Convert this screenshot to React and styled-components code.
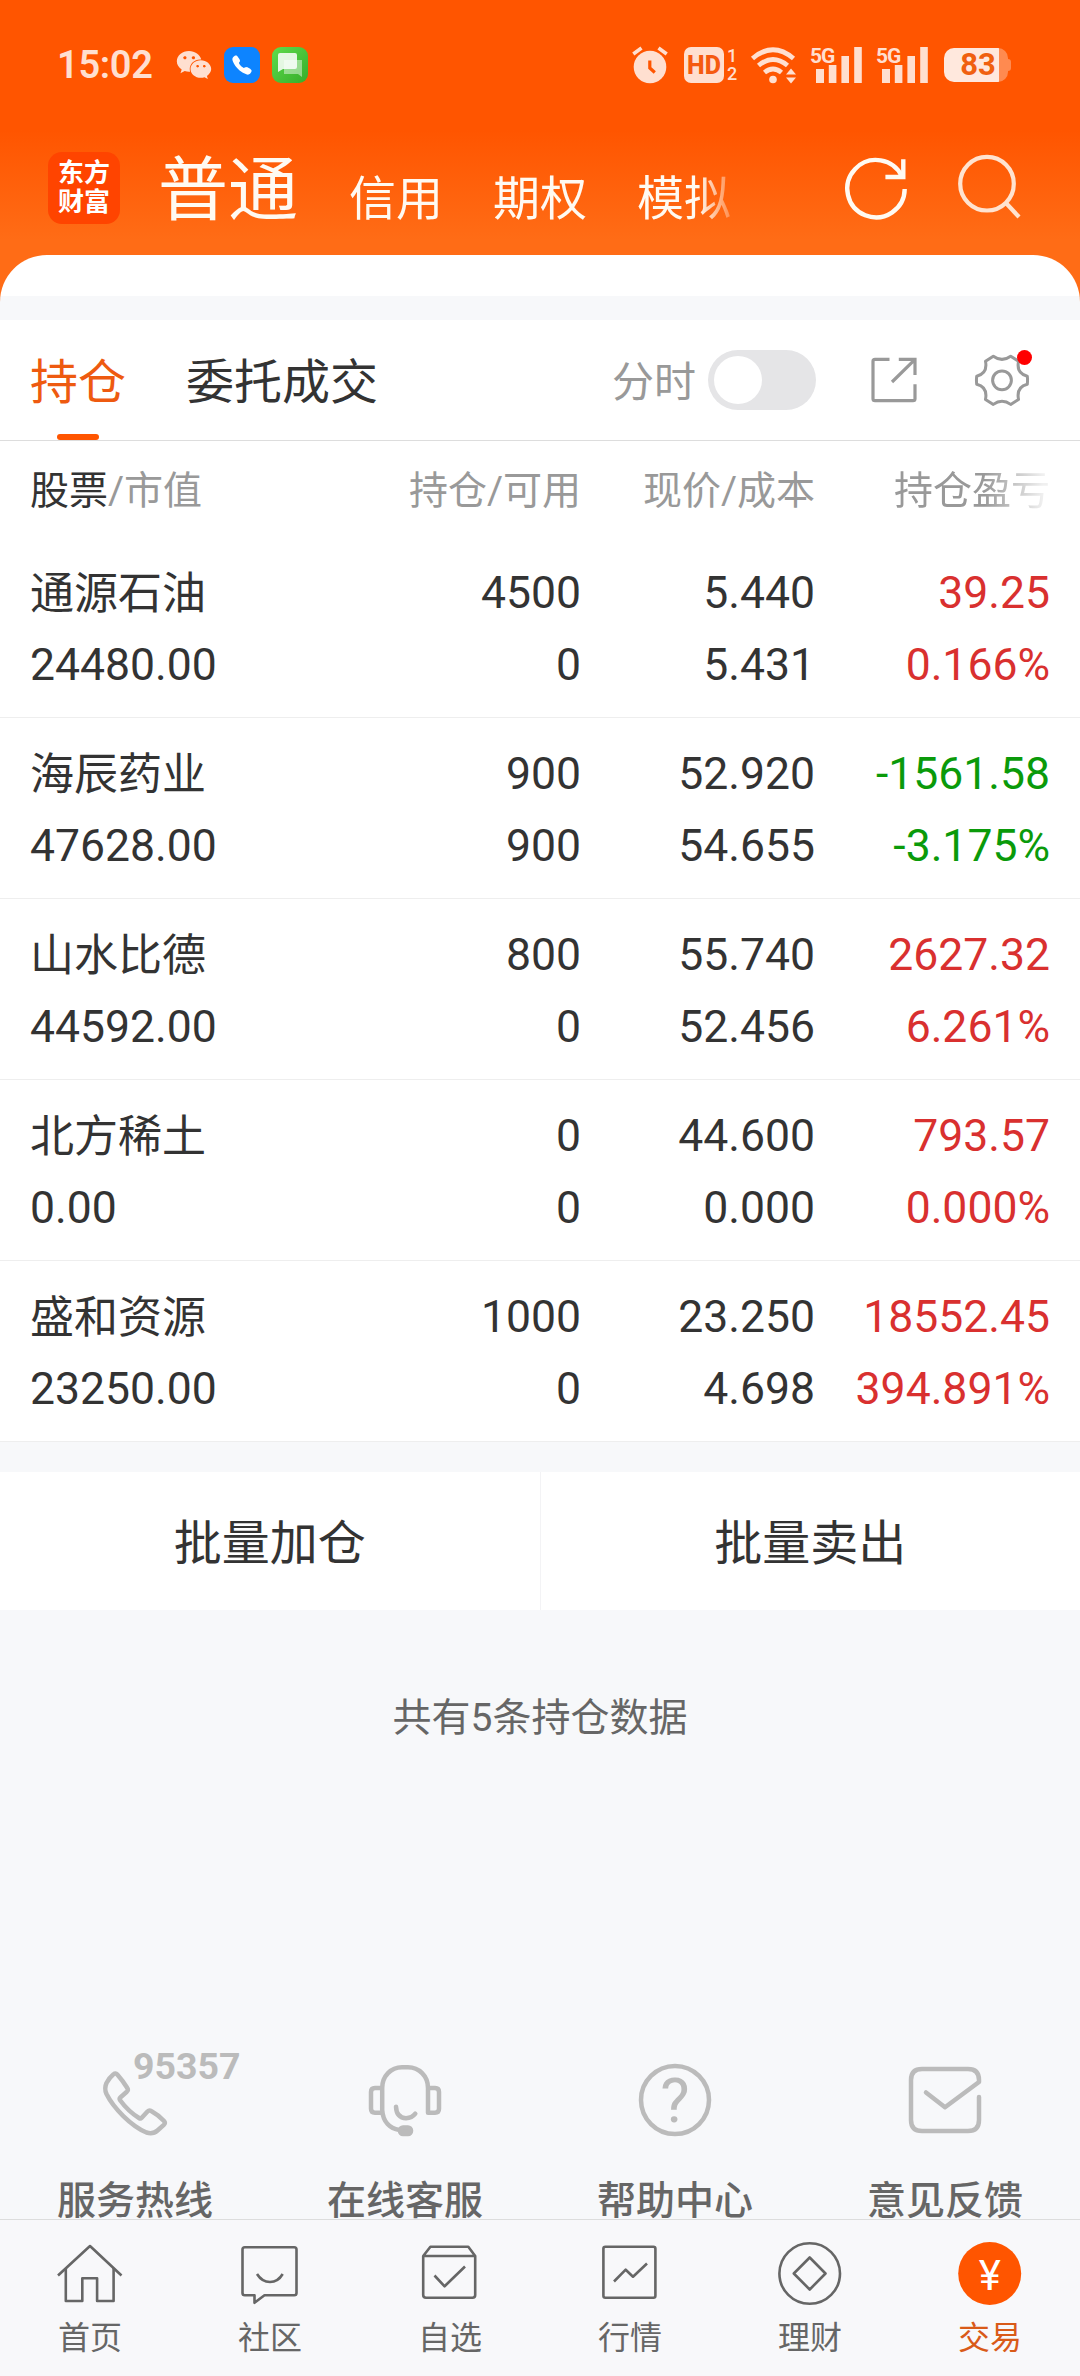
import styled, { createGlobalStyle } from "styled-components";
import { FaWeixin } from "react-icons/fa";
import { IoCall } from "react-icons/io5";

const holdings = [
    { name: "通源石油", value: "24480.00", amount: "4500", usable: "0", price: "5.440", cost: "5.431", profit: "39.25", rate: "0.166%" },
    { name: "海辰药业", value: "47628.00", amount: "900", usable: "900", price: "52.920", cost: "54.655", profit: "-1561.58", rate: "-3.175%" },
    { name: "山水比德", value: "44592.00", amount: "800", usable: "0", price: "55.740", cost: "52.456", profit: "2627.32", rate: "6.261%" },
    { name: "北方稀土", value: "0.00", amount: "0", usable: "0", price: "44.600", cost: "0.000", profit: "793.57", rate: "0.000%" },
    { name: "盛和资源", value: "23250.00", amount: "1000", usable: "0", price: "23.250", cost: "4.698", profit: "18552.45", rate: "394.891%" },
];

const services = [
    { label: "服务热线", icon: <HotlineIcon />, number: "95357" },
    { label: "在线客服", icon: <HeadsetIcon /> },
    { label: "帮助中心", icon: <HelpIcon /> },
    { label: "意见反馈", icon: <FeedbackIcon /> },
];

const menu = [
    { label: "首页", icon: <HomeIcon /> },
    { label: "社区", icon: <ChatIcon /> },
    { label: "自选", icon: <BoxIcon /> },
    { label: "行情", icon: <ChartIcon /> },
    { label: "理财", icon: <CoinIcon /> },
    { label: "交易", icon: <TradeIcon />, active: true },
];

export default function App() {
    return (
        <>
            <GlobalStyle />
            <Page>
                <Header>
                    <StatusBar />
                    <TitleBar>
                        <Logo>
                            <span>东方</span>
                            <span>财富</span>
                        </Logo>
                        <Accounts>
                            <Account $big>普通</Account>
                            <Account>信用</Account>
                            <Account>期权</Account>
                            <Account>模拟</Account>
                        </Accounts>
                        <TitleActions>
                            <RefreshIcon />
                            <SearchIcon />
                        </TitleActions>
                    </TitleBar>
                    <Sheet />
                </Header>
                <Tabs>
                    <Tab $active>持仓</Tab>
                    <Tab>委托成交</Tab>
                    <TabTools>
                        <SwitchLabel>分时</SwitchLabel>
                        <Switch>
                            <Knob />
                        </Switch>
                        <ExportIcon />
                        <Settings>
                            <GearIcon />
                            <RedDot />
                        </Settings>
                    </TabTools>
                </Tabs>
                <TableHead>
                    <HeadCell $left>
                        <b>股票</b>/市值
                    </HeadCell>
                    <HeadCell>持仓/可用</HeadCell>
                    <HeadCell>现价/成本</HeadCell>
                    <HeadCell $fade>持仓盈亏</HeadCell>
                </TableHead>
                {holdings.map((item) => (
                    <Row key={item.name}>
                        <Cell $left>
                            <Name>{item.name}</Name>
                            <span>{item.value}</span>
                        </Cell>
                        <Cell>
                            <span>{item.amount}</span>
                            <span>{item.usable}</span>
                        </Cell>
                        <Cell>
                            <span>{item.price}</span>
                            <span>{item.cost}</span>
                        </Cell>
                        <Cell $color={item.profit.startsWith("-") ? "#0a9a0a" : "#d9302f"}>
                            <span>{item.profit}</span>
                            <span>{item.rate}</span>
                        </Cell>
                    </Row>
                ))}
                <BatchBar>
                    <BatchButton>批量加仓</BatchButton>
                    <BatchButton>批量卖出</BatchButton>
                </BatchBar>
                <Summary>共有5条持仓数据</Summary>
                <Services>
                    {services.map((item) => (
                        <Service key={item.label}>
                            <ServiceIcon>
                                {item.icon}
                                {item.number && <Hotline>{item.number}</Hotline>}
                            </ServiceIcon>
                            <span>{item.label}</span>
                        </Service>
                    ))}
                </Services>
                <Menu>
                    {menu.map((item) => (
                        <MenuItem key={item.label} $active={item.active}>
                            {item.icon}
                            <span>{item.label}</span>
                        </MenuItem>
                    ))}
                </Menu>
            </Page>
        </>
    );
}

function StatusBar() {
    return (
        <Status>
            <Time>15:02</Time>
            <FaWeixin size={36} />
            <AppBadge>
                <IoCall size={22} color="#fff" />
            </AppBadge>
            <AppBadge $green>
                <svg width="36" height="36" viewBox="0 0 36 36">
                    <path d="M12 13h18v17l-4-3H12z" fill="#fff" opacity=".45" />
                    <path d="M6 8q0-2 2-2h15q2 0 2 2v12q0 2-2 2H11l-5 3z" fill="#fff" opacity=".85" />
                </svg>
            </AppBadge>
            <StatusRight>
                <svg width="40" height="40" viewBox="0 0 40 40">
                    <circle cx="20" cy="22" r="16.3" fill="currentColor" />
                    <path d="M3.3 9l8.2-6M36.7 9l-8.2-6" stroke="currentColor" strokeWidth="3.6" />
                    <path d="M19.8 15.5v7.5l5 4.5" fill="none" stroke="#ff5500" strokeWidth="3.2" />
                </svg>
                <HdBadge>HD</HdBadge>
                <SimNumbers>
                    <span>1</span>
                    <span>2</span>
                </SimNumbers>
                <WifiIcon />
                <Signal />
                <Signal />
                <Battery>
                    <BatteryLevel>83</BatteryLevel>
                    <BatteryTip />
                </Battery>
            </StatusRight>
        </Status>
    );
}

function WifiIcon() {
    return (
        <svg width="50" height="44" viewBox="0 0 50 44">
            <g fill="none" stroke="currentColor" strokeWidth="4.8">
                <path d="M4.5 15.5Q25-2 45.5 15.5" />
                <path d="M10.5 22.5Q25 10.5 39.5 22.5" />
                <path d="M16.5 29.5Q25 22.5 33.5 29.5" />
            </g>
            <circle cx="25" cy="36.5" r="3.8" fill="currentColor" />
            <path d="M38 31.5l5-6 5 6zM38 34.5l5 6 5-6z" fill="currentColor" />
        </svg>
    );
}

function Signal() {
    return (
        <SignalBox>
            <span>5G</span>
            <svg width="48" height="36" viewBox="0 0 48 36">
                <path d="M0 22h8v14H0zM12.8 18h7.6v18h-7.6zM25.4 9h7.6v27h-7.6zM38.2 0h7.6v36h-7.6z" fill="currentColor" />
            </svg>
        </SignalBox>
    );
}

function RefreshIcon() {
    return (
        <svg width="72" height="72" viewBox="0 0 72 72" fill="none" stroke="#fffaf2" strokeWidth="4.4">
            <path d="M64.7 37A28.7 28.7 0 1 1 62 24.5" />
            <path d="M63.3 7.3V25H45.4" />
        </svg>
    );
}

function SearchIcon() {
    return (
        <svg width="72" height="72" viewBox="0 0 72 72" fill="none" stroke="#ffe3d0" strokeWidth="4.2">
            <circle cx="33" cy="31.7" r="26.8" />
            <path d="M51.5 50.5L65 65" />
        </svg>
    );
}

function ExportIcon() {
    return (
        <svg width="60" height="60" viewBox="0 0 60 60" fill="none" stroke="#999" strokeWidth="3.2">
            <path d="M25.5 9.3H11q-2 0-2 2V48.7q0 2 2 2H49q2 0 2-2V34.3" />
            <path d="M34.8 9.3H51V25M28 32L50.5 9.8" />
        </svg>
    );
}

function GearIcon() {
    return (
        <svg width="60" height="60" viewBox="0 0 60 60" fill="none" stroke="#999" strokeWidth="3" strokeLinejoin="round">
            <circle cx="30" cy="30.3" r="9.4" />
            <path d="M21.3 6.2Q30 12.5 38.7 6.2L46.5 11.2C45 19 48 24.5 55.3 26.3Q55.8 30.3 55.3 34.3C48 36.1 45 41.6 46.5 49.4L38.7 54.4Q30 48.1 21.3 54.4L13.5 49.4C15 41.6 12 36.1 4.7 34.3Q4.2 30.3 4.7 26.3C12 24.5 15 19 13.5 11.2Z" />
        </svg>
    );
}

function ServiceSvg({ children }) {
    return (
        <svg width="84" height="84" viewBox="0 0 84 84" fill="none" stroke="#bbb" strokeWidth="4.5" strokeLinecap="round" strokeLinejoin="round">
            {children}
        </svg>
    );
}

function HotlineIcon() {
    return (
        <ServiceSvg>
            <path d="M20.5 16.3q2-1.8 3.8.2Q30 23 34.3 30q1.3 2-.5 3.7L27.3 39.5q-1.2 1.3-.2 2.7Q35 53 46 60q1.5 1 2.7-.3L54.5 53.5q1.7-1.7 3.7-.5Q65.5 57 71 63q1.7 2-.2 3.8L64.5 72.5q-4.5 4-11 2C38 68 20.5 50 13.5 36q-2.5-5.500 0-11Q16.5 19.5 20.5 16.3z" />
        </ServiceSvg>
    );
}

function HeadsetIcon() {
    return (
        <ServiceSvg>
            <path d="M19.2 54.7H12q-4 0-4-4V34q0-4 4-4h7.2M65 30h7q4 0 4 4v16.7q0 4-4 4H65V30C65 18 56 9.3 45 9.3H39C28 9.3 19.2 18 19.2 30V52C20 64 27 70.5 36.4 72" />
            <path d="M33 48.7Q33.5 60 43 60.2Q49 60 52.3 55.7" />
            <rect x="37" y="69.5" width="11" height="6.5" rx="3" fill="#bbb" />
        </ServiceSvg>
    );
}

function HelpIcon() {
    return (
        <ServiceSvg>
            <circle cx="42" cy="42" r="34" />
            <text x="42" y="64" textAnchor="middle" fontSize="62" fontWeight="400" fill="#bbb" stroke="none">?</text>
        </ServiceSvg>
    );
}

function FeedbackIcon() {
    return (
        <ServiceSvg>
            <path d="M76 39V62q0 11-11 11H19Q8 73 8 62V22Q8 11 19 11H65q11 0 11 11V24L42 49.3L23 34.5" />
        </ServiceSvg>
    );
}

function MenuSvg({ children }) {
    return (
        <svg width="72" height="72" viewBox="0 0 72 72" fill="none" stroke="#666" strokeWidth="2.6" strokeLinejoin="round">
            {children}
        </svg>
    );
}

function HomeIcon() {
    return (
        <MenuSvg>
            <path d="M4 38.5L36 9L67.5 38.5" />
            <path d="M11.8 31V64H28.3V41.3H43.1V64H59.6V31" />
        </MenuSvg>
    );
}

function ChatIcon() {
    return (
        <MenuSvg>
            <path d="M10.8 10.3H60.2q2.3 0 2.3 2.3V56q0 2.3-2.3 2.3H30.5L20.5 65.8V58.3H10.8q-2.3 0-2.3-2.3V12.6q0-2.3 2.3-2.3z" />
            <path d="M23 37Q28 45 36 45T48.7 37" />
        </MenuSvg>
    );
}

function BoxIcon() {
    return (
        <MenuSvg>
            <path d="M9.2 19L16.4 9.7H54.3L61.2 19V58q0 2.7-2.7 2.7H12q-2.8 0-2.8-2.7zH61.2" />
            <path d="M20.5 38.5L30.6 49.3L51 29.5" />
        </MenuSvg>
    );
}

function ChartIcon() {
    return (
        <MenuSvg>
            <rect x="9.4" y="9.7" width="52" height="51" rx="2" />
            <path d="M20 44.5L31.7 32.7L39 39.7L53 26.5" />
        </MenuSvg>
    );
}

function CoinIcon() {
    return (
        <MenuSvg>
            <circle cx="35.7" cy="36.5" r="30.3" />
            <path d="M35.7 20.5L51.5 36.5L35.7 52.5L19.8 36.5z" />
        </MenuSvg>
    );
}

function TradeIcon() {
    return (
        <MenuSvg>
            <circle cx="35.7" cy="36.5" r="31.5" fill="#ff5500" stroke="none" />
            <text x="35.7" y="52.5" textAnchor="middle" fontSize="42" fill="#fff" stroke="none">¥</text>
        </MenuSvg>
    );
}

const GlobalStyle = createGlobalStyle`
    body {
        margin: 0;
        font-family: Roboto, "Noto Sans CJK SC", sans-serif;
        color: #333;
    }
    svg {
        display: block;
        flex: none;
    }
`;

const Page = styled.div`
    width: 1080px;
    height: 2376px;
    display: flex;
    flex-direction: column;
    overflow: hidden;
    background: #f7f8fa;
`;

const Header = styled.div`
    background: linear-gradient(#ff5500 0, #ff5500 130px, #ff6c16 240px, #ff6c16 100%);
`;

const Status = styled.div`
    display: flex;
    align-items: center;
    height: 130px;
    box-sizing: border-box;
    padding: 0 69px 0 57px;
    color: #ffdfd0;
`;

const Time = styled.div`
    width: 119px;
    font-size: 38px;
    font-weight: 600;
    letter-spacing: -0.3px;
`;

const AppBadge = styled.div`
    display: flex;
    align-items: center;
    justify-content: center;
    width: 36px;
    height: 36px;
    margin-left: 12px;
    border-radius: 9px;
    background: ${(p) => (p.$green ? "linear-gradient(135deg, #5fdc4c, #36ad2a)" : "#0d84ff")};
`;

const StatusRight = styled.div`
    display: flex;
    align-items: center;
    margin-left: auto;
`;

const HdBadge = styled.div`
    width: 40px;
    height: 36px;
    margin-left: 14px;
    border-radius: 7px;
    background: #ffdfd0;
    color: #f55a10;
    font-size: 25px;
    font-weight: 800;
    line-height: 37px;
    text-align: center;
`;

const SimNumbers = styled.div`
    display: flex;
    flex-direction: column;
    width: 21px;
    padding-left: 3px;
    font-size: 18px;
    font-weight: 500;
    line-height: 18px;
`;

const SignalBox = styled.div`
    display: flex;
    width: 66px;
    font-size: 21px;
    font-weight: 700;
    line-height: 18px;
    letter-spacing: -1px;

    span {
        width: 18px;
        margin-right: -12px;
        padding-left: 12px;
        white-space: nowrap;
    }
`;

const Battery = styled.div`
    display: flex;
    align-items: center;
    margin-left: 14px;
`;

const BatteryLevel = styled.div`
    width: 64px;
    height: 34px;
    box-sizing: border-box;
    padding-left: 4px;
    border-radius: 10px;
    background: linear-gradient(90deg, #ffe8dd 55px, #ff8a50 55px);
    color: #f0600f;
    font-size: 31px;
    font-weight: 700;
    line-height: 34px;
    text-align: center;
`;

const BatteryTip = styled.div`
    width: 3px;
    height: 12px;
    border-radius: 0 3px 3px 0;
    background: #ff8a50;
`;

const TitleBar = styled.div`
    display: flex;
    align-items: center;
    height: 125px;
    box-sizing: border-box;
    padding: 0 54px 9px 48px;
`;

const Logo = styled.div`
    display: flex;
    flex-direction: column;
    justify-content: center;
    width: 72px;
    height: 72px;
    border-radius: 14px;
    background: #ff4400;
    color: #fff;
    font-size: 26px;
    font-weight: 700;
    line-height: 29px;
    text-align: center;
`;

const Accounts = styled.div`
    display: flex;
    align-items: baseline;
    width: 585px;
    margin: 14px 0 0 38px;
    mask-image: linear-gradient(90deg, #000 540px, transparent 585px);
`;

const Account = styled.div`
    flex: none;
    margin-right: ${(p) => (p.$big ? 51 : 50)}px;
    color: #fffaf2;
    font-size: ${(p) => (p.$big ? 70 : 47)}px;
    line-height: 100px;
`;

const TitleActions = styled.div`
    display: flex;
    gap: 42px;
    margin-left: auto;
`;

const Sheet = styled.div`
    height: 65px;
    border-radius: 47px 47px 0 0;
    background: linear-gradient(#fff 41px, #f7f8fa 41px);
`;

const Tabs = styled.div`
    display: flex;
    height: 120px;
    padding: 0 48px 0 30px;
    border-bottom: 1px solid #ddd;
    background: #fff;
`;

const Tab = styled.div`
    display: flex;
    flex-direction: column;
    align-items: center;
    margin-right: 60px;
    color: ${(p) => (p.$active ? "#ee5a10" : "#333")};
    font-size: 48px;
    line-height: 126px;

    &::after {
        content: "";
        width: 42px;
        height: 6px;
        margin-top: -12px;
        border-radius: 3px;
        background: ${(p) => (p.$active ? "#ff5500" : "transparent")};
    }
`;

const TabTools = styled.div`
    display: flex;
    align-items: center;
    margin-left: auto;
`;

const SwitchLabel = styled.div`
    margin-right: 12px;
    padding-bottom: 3px;
    color: #999;
    font-size: 42px;
`;

const Switch = styled.div`
    width: 108px;
    height: 60px;
    box-sizing: border-box;
    margin-right: 48px;
    padding: 6px;
    border-radius: 30px;
    background: #e5e5e7;
`;

const Knob = styled.div`
    width: 48px;
    height: 48px;
    border-radius: 50%;
    background: #fff;
`;

const Settings = styled.div`
    position: relative;
    margin-left: 48px;
`;

const RedDot = styled.div`
    position: absolute;
    top: 0;
    right: 0;
    width: 15px;
    height: 15px;
    border-radius: 50%;
    background: #f00;
`;

const TableHead = styled.div`
    display: grid;
    grid-template-columns: 316px 235px 234px 235px;
    height: 96px;
    padding: 0 30px;
    background: #fff;
    color: #999;
    font-size: 39px;
    line-height: 101px;
`;

const HeadCell = styled.div`
    text-align: ${(p) => (p.$left ? "left" : "right")};
    white-space: nowrap;
    ${(p) => p.$fade && "mask-image: linear-gradient(90deg, #000 72%, rgba(0, 0, 0, 0.15) 97%);"}

    b {
        color: #333;
        font-weight: 400;
    }
`;

const Row = styled.div`
    display: grid;
    grid-template-columns: 316px 235px 234px 235px;
    height: 160px;
    padding: 20px 30px 0;
    border-bottom: 1px solid #eee;
    background: #fff;
`;

const Cell = styled.div`
    display: flex;
    flex-direction: column;
    align-items: ${(p) => (p.$left ? "flex-start" : "flex-end")};
    color: ${(p) => p.$color || "#333"};
    font-size: 44.5px;
    line-height: 72px;
`;

const Name = styled.span`
    height: 71px;
    padding-top: 1px;
    font-size: 44px;
`;

const BatchBar = styled.div`
    display: flex;
    height: 138px;
    margin-top: 30px;
    background: #fff;
`;

const BatchButton = styled.div`
    flex: 1;
    padding-top: 3px;
    font-size: 48px;
    line-height: 138px;
    text-align: center;

    & + & {
        border-left: 1px solid #f3f3f5;
    }
`;

const Summary = styled.div`
    margin-top: 78px;
    color: #666;
    font-size: 39px;
    line-height: 60px;
    text-align: center;
`;

const Services = styled.div`
    display: flex;
    margin-top: auto;
`;

const Service = styled.div`
    display: flex;
    flex: 1;
    flex-direction: column;
    align-items: center;
    color: #666;
    font-size: 39px;
    font-weight: 500;
    line-height: 35px;

    > span {
        margin-top: 42px;
    }
`;

const ServiceIcon = styled.div`
    position: relative;
`;

const Hotline = styled.div`
    position: absolute;
    top: -12px;
    left: 40px;
    color: #bbb;
    font-size: 37.5px;
    font-weight: 700;
    line-height: 40px;
`;

const Menu = styled.div`
    display: flex;
    height: 156px;
    border-top: 1px solid #ddd;
    background: #f8f8fa;
`;

const MenuItem = styled.div`
    display: flex;
    flex: 1;
    flex-direction: column;
    align-items: center;
    padding-top: 17px;
    color: ${(p) => (p.$active ? "#d95a18" : "#666")};
    font-size: 32px;
    line-height: 58px;
`;
